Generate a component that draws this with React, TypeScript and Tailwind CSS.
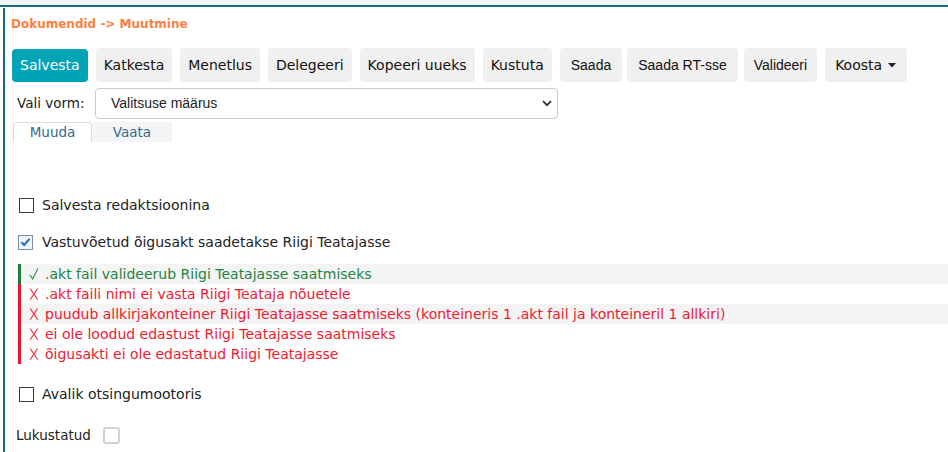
import React from "react"

const verdana = "font-['DejaVu_Sans',Verdana,sans-serif]"
const arial = "font-['Liberation_Sans',Arial,sans-serif]"

type Btn = { label: string; arial?: boolean; cls: string; caret?: boolean }

const buttons: Btn[] = [
  { label: "Katkesta", cls: "ml-[8px] px-[8px]" },
  { label: "Menetlus", cls: "ml-[8px] px-[8px]" },
  { label: "Delegeeri", cls: "ml-[8px] px-[8px]" },
  { label: "Kopeeri uueks", cls: "ml-[8px] px-[8px]" },
  { label: "Kustuta", cls: "ml-[8px] px-[8px]" },
  { label: "Saada", arial: true, cls: "ml-[8px] px-[11px]" },
  { label: "Saada RT-sse", arial: true, cls: "ml-[5px] px-[11px]" },
  { label: "Valideeri", arial: true, cls: "ml-[6px] px-[10px]" },
  { label: "Koosta", cls: "ml-[8px] pl-[10px] pr-[11px]", caret: true },
]

const checks = [
  { ok: true, text: ".akt fail valideerub Riigi Teatajasse saatmiseks" },
  { ok: false, text: ".akt faili nimi ei vasta Riigi Teataja nõuetele" },
  { ok: false, text: "puudub allkirjakonteiner Riigi Teatajasse saatmiseks (konteineris 1 .akt fail ja konteineril 1 allkiri)" },
  { ok: false, text: "ei ole loodud edastust Riigi Teatajasse saatmiseks" },
  { ok: false, text: "õigusakti ei ole edastatud Riigi Teatajasse" },
]

function Box({ checked }: { checked?: boolean }) {
  if (checked) {
    return (
      <span className="flex h-[15px] w-[15px] items-center justify-center border border-[#7f8ea0] bg-[#eef4fb]">
        <svg width="11" height="10" viewBox="0 0 11 10">
          <path d="M1.5 5.2 L4.2 8 L9.5 1.8" fill="none" stroke="#2f6db3" strokeWidth="2" />
        </svg>
      </span>
    )
  }
  return <span className="block h-[15px] w-[15px] border border-[#3a3a3a] bg-white" />
}

function Mark({ ok }: { ok: boolean }) {
  return ok ? (
    <svg width="10" height="14" viewBox="0 0 10 14" className="shrink-0">
      <path d="M1 8 L3.6 12 L9 1.5" fill="none" stroke="#2b8a4e" strokeWidth="1.1" />
    </svg>
  ) : (
    <svg width="10" height="14" viewBox="0 0 10 14" className="shrink-0">
      <path d="M1.2 1.5 Q4.5 6.5 8.8 12.8 M8.6 1.5 Q5.2 6.5 1.2 12.8" fill="none" stroke="#f2263a" strokeWidth="1.1" />
    </svg>
  )
}

export default function App() {
  return (
    <div className={`h-[452px] w-[948px] overflow-hidden bg-[#f2f5f7] pt-[5px] text-[14px] ${verdana}`}>
      <div className="h-[447px] border-t-2 border-[#0e6c87] bg-white pt-px pl-[3px]">
        <div className="h-full border-l-2 border-[#0e6c87] pl-[6px]">
          <div className="flex h-[41px] items-center pb-[9px] text-[12px] font-bold text-[#ff7f3e]">
            Dokumendid -&gt; Muutmine
          </div>

          <div className="flex pl-[1px]">
            <button className="h-[33px] rounded-[4px] bg-[#01a3b6] px-[8px] text-[14px] text-white">
              Salvesta
            </button>
            {buttons.map((b) => (
              <button
                key={b.label}
                className={`-mt-px flex h-[34px] items-center gap-[6px] rounded-[4px] bg-[#f0f0f0] text-[#111] ${b.arial ? `${arial} text-[14px]` : "text-[14px]"} ${b.cls}`}
              >
                {b.label}
                {b.caret && (
                  <svg width="8" height="5" viewBox="0 0 8 5">
                    <path d="M0 0 H8 L4 4.5 Z" fill="#222" />
                  </svg>
                )}
              </button>
            ))}
          </div>

          <div className="mt-[6px] flex items-center pl-[6px]">
            <span className="w-[78px] text-[13.5px] text-[#222]">Vali vorm:</span>
            <div className={`relative flex h-[31px] w-[463px] items-center rounded-[4px] border border-[#c9c9c9] pl-[15px] text-[14px] text-[#222] ${arial}`}>
              Valitsuse määrus
              <svg width="10" height="7" viewBox="0 0 10 7" className="absolute right-[5px] top-[11px]">
                <path d="M1 1.2 L5 5.2 L9 1.2" fill="none" stroke="#333" strokeWidth="1.8" />
              </svg>
            </div>
          </div>

          <div className="mt-[3px] flex pl-[2px] text-[13.5px] text-[#336a8c]">
            <div className="flex h-[20px] w-[79px] items-center justify-center rounded-t-[4px] border border-b-0 border-[#dcdcdc] bg-white">
              Muuda
            </div>
            <div className="flex h-[20px] w-[80px] items-center justify-center bg-[#f3f5f7]">Vaata</div>
          </div>

          <div className="mt-[55px] flex h-[16px] items-center pl-[8px] text-[#222]">
            <Box />
            <span className="ml-[8px]">Salvesta redaktsioonina</span>
          </div>

          <div className="mt-[21px] flex h-[16px] items-center pl-[7px] text-[#222]">
            <Box checked />
            <span className="ml-[9px]">Vastuvõetud õigusakt saadetakse Riigi Teatajasse</span>
          </div>

          <div className="-mr-px mt-[14px] ml-[7px]">
            {checks.map((c, i) => (
              <div
                key={i}
                className={`flex h-[20px] items-center gap-[6px] whitespace-nowrap border-l-[3px] pl-[8px] ${c.ok ? "border-[#1d7d3a] text-[#1f8443]" : "border-[#f0142a] text-[#f2182f]"} ${i === 0 || i === 2 ? "bg-[#f4f4f4]" : "bg-white"}`}
              >
                <Mark ok={c.ok} />
                <span>{c.text}</span>
              </div>
            ))}
          </div>

          <div className="mt-[22px] flex h-[16px] items-center pl-[8px] text-[#222]">
            <Box />
            <span className="ml-[8px]">Avalik otsingumootoris</span>
          </div>

          <div className="mt-[23px] flex items-center pl-[5px] text-[13.5px] text-[#222]">
            <span>Lukustatud</span>
            <span className="ml-[12px] block h-[17px] w-[17px] rounded-[3px] border-2 border-[#d2d2d2] bg-white" />
          </div>
        </div>
      </div>
    </div>
  )
}
